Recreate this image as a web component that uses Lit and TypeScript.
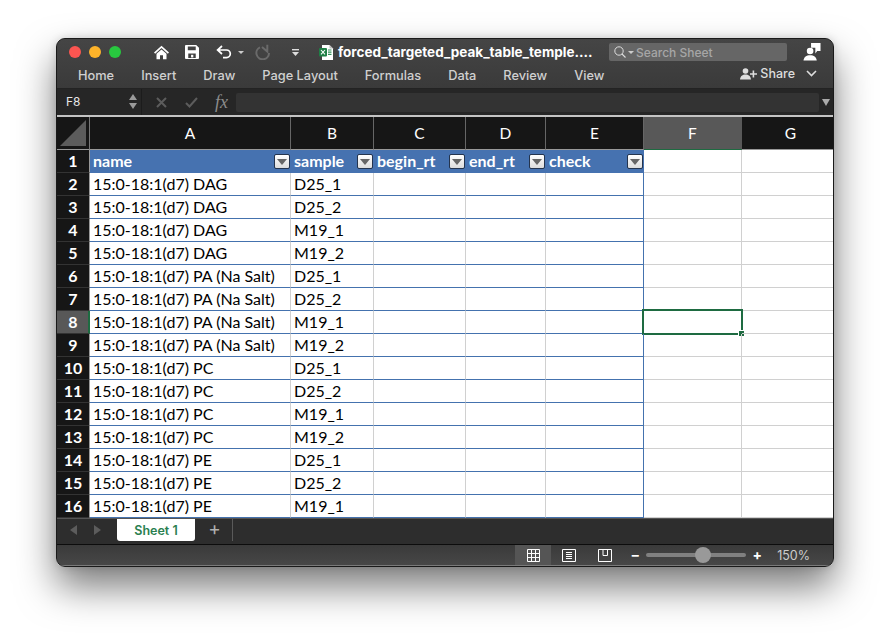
import { LitElement, html, css, svg } from 'lit';
import { customElement } from 'lit/decorators.js';

const NAMES = [
  'name',
  '15:0-18:1(d7) DAG', '15:0-18:1(d7) DAG', '15:0-18:1(d7) DAG', '15:0-18:1(d7) DAG',
  '15:0-18:1(d7) PA (Na Salt)', '15:0-18:1(d7) PA (Na Salt)', '15:0-18:1(d7) PA (Na Salt)', '15:0-18:1(d7) PA (Na Salt)',
  '15:0-18:1(d7) PC', '15:0-18:1(d7) PC', '15:0-18:1(d7) PC', '15:0-18:1(d7) PC',
  '15:0-18:1(d7) PE', '15:0-18:1(d7) PE', '15:0-18:1(d7) PE',
];
const SAMPLES = ['D25_1', 'D25_2', 'M19_1', 'M19_2'];
const TABS = ['Home', 'Insert', 'Draw', 'Page Layout', 'Formulas', 'Data', 'Review', 'View'];
const COLS = ['A', 'B', 'C', 'D', 'E', 'F', 'G'];
const HEADS = ['name', 'sample', 'begin_rt', 'end_rt', 'check'];

const icons = {
  home: svg`<svg width="17" height="15" viewBox="0 0 20 18"><path d="M10 1 L19 9 L17.6 10.4 L10 3.7 L2.4 10.4 L1 9Z" fill="#fff"/><path d="M4 10.6 L10 5.4 L16 10.6 V17 H11.8 V12.4 H8.2 V17 H4Z" fill="#fff"/></svg>`,
  save: svg`<svg width="14" height="14" viewBox="0 0 15 15"><path fill-rule="evenodd" d="M1 0 H12 L15 3 V14 a1 1 0 0 1-1 1 H1 a1 1 0 0 1-1-1 V1 a1 1 0 0 1 1-1Z M3 1.5 V5.5 H11.5 V1.5Z M3.5 9 V14 H11.5 V9Z" fill="#fff"/><rect x="6.5" y="10.5" width="2.4" height="2.8" fill="#fff"/></svg>`,
  undo: svg`<svg width="16" height="14" viewBox="0 0 16 14"><path d="M6 1 L1.6 5 L6 9 M2 5 H10.5 a3.8 3.8 0 0 1 0 7.6 H7" fill="none" stroke="#fff" stroke-width="1.7"/></svg>`,
  redo: svg`<svg width="17" height="16" viewBox="0 0 17 16"><path d="M12.3 .7 V7.5 L7 3" fill="none" stroke="#6a6a6a" stroke-width="2"/><path d="M5 3.3 A6.3 6.3 0 1 0 14 9" fill="none" stroke="#6a6a6a" stroke-width="2"/></svg>`,
  customize: svg`<svg width="9" height="9" viewBox="0 0 9 9"><rect x="1" y="1" width="7" height="1.4" fill="#ddd"/><path d="M1 4 H8 L4.5 8Z" fill="#ddd"/></svg>`,
  xlsx: svg`<svg width="15" height="15" viewBox="0 0 15 15"><path d="M3 0 H10.5 L14 3.5 V15 H3Z" fill="#fff"/><path d="M10.5 0 V3.5 H14Z" fill="#bbb"/><rect x="0" y="3" width="8" height="8.4" rx="1" fill="#1f7f46"/><path d="M2 5 L6 9.4 M6 5 L2 9.4" stroke="#fff" stroke-width="1.1"/><path d="M9 5 H12.5 M9 7.2 H12.5 M9 9.4 H12.5" stroke="#2f8f56" stroke-width="1.2"/></svg>`,
  search: svg`<svg width="12" height="12" viewBox="0 0 12 12"><circle cx="5" cy="5" r="4.2" fill="none" stroke="#ddd" stroke-width="1"/><path d="M8 8 L11.5 11.5" stroke="#ddd" stroke-width="1.1"/></svg>`,
  person: svg`<svg width="18" height="18" viewBox="0 0 19 19"><path d="M8.5 0 H18.5 V8.5 H15 L13 11 V5 H8.5Z" fill="#fff"/><circle cx="7.5" cy="8.5" r="3.5" fill="#fff"/><path d="M0.5 18.5 C1 14.5 3.5 12.8 7.5 12.8 S14 14.5 14.5 18.5Z" fill="#fff"/></svg>`,
  share: svg`<svg width="17" height="12" viewBox="0 0 17 12"><circle cx="5.5" cy="3" r="2.8" fill="#ddd"/><path d="M0 11.5 C.4 8 2.5 6.6 5.5 6.6 S10.6 8 11 11.5Z" fill="#ddd"/><path d="M13.4 2.5 V9.5 M10 6 H17" stroke="#ddd" stroke-width="1.6"/></svg>`,
  chevron: svg`<svg width="11" height="7" viewBox="0 0 11 7"><path d="M1 1 L5.5 5.5 L10 1" fill="none" stroke="#ddd" stroke-width="1.6"/></svg>`,
  gridView: svg`<svg width="13" height="13" viewBox="0 0 13 13"><path d="M.5 .5 H12.5 V12.5 H.5Z M4.5 .5 V12.5 M8.5 .5 V12.5 M.5 4.5 H12.5 M.5 8.5 H12.5" fill="none" stroke="#fff"/></svg>`,
  pageView: svg`<svg width="14" height="13" viewBox="0 0 14 13"><path d="M.5 .5 H13.5 V12.5 H.5Z" fill="none" stroke="#fff"/><path d="M4 3.5 H10 M4 5.5 H10 M4 7.5 H10 M4 9.5 H10" stroke="#fff"/></svg>`,
  breakView: svg`<svg width="14" height="13" viewBox="0 0 14 13"><path d="M.5 .5 H13.5 V12.5 H.5Z M5 .5 V6.5 H9.5 V.5" fill="none" stroke="#fff"/></svg>`,
};

@customElement('app-root')
export class AppRoot extends LitElement {
  static styles = css`
    :host {
      display: block;
      height: 641px;
      box-sizing: border-box;
      padding: 38px 56px 74px;
      background: #fff;
      font-family: Inter, Roboto, sans-serif;
      overflow: hidden;
    }
    .window {
      height: 529px;
      display: flex;
      flex-direction: column;
      background: #333;
      border: 1px solid #1a1a1a;
      border-radius: 9px;
      overflow: hidden;
      box-sizing: border-box;
    }
    .shadow {
      border-radius: 9px;
      box-shadow: 0 20px 38px rgba(0, 0, 0, 0.52), 0 0 8px rgba(0, 0, 0, 0.14);
    }
    .titlebar {
      height: 49px;
      flex: none;
      background: linear-gradient(#454545, #3a3a3a);
      border-bottom: 1px solid #232323;
      display: flex;
      flex-direction: column;
    }
    .toolbar {
      height: 26px;
      flex: none;
      display: flex;
      align-items: center;
      box-sizing: border-box;
    }
    .lights {
      display: flex;
      gap: 8px;
      padding-left: 12px;
      width: 96px;
      box-sizing: border-box;
      flex: none;
    }
    .light {
      width: 12px;
      height: 12px;
      border-radius: 50%;
    }
    .tool {
      display: flex;
      align-items: center;
      flex: none;
    }
    .doc {
      display: flex;
      align-items: center;
      gap: 4px;
      color: #fff;
      font-size: 13.5px;
      font-weight: 700;
      margin-left: 19px;
      width: 290px;
      flex: none;
      white-space: nowrap;
    }
    .search {
      width: 178px;
      height: 18px;
      background: #666;
      border-radius: 2px;
      display: flex;
      align-items: center;
      gap: 2px;
      padding-left: 5px;
      box-sizing: border-box;
      color: #a6a6a6;
      font-size: 12px;
      font-weight: 500;
      flex: none;
    }
    .caret {
      width: 0;
      height: 0;
      border: 3px solid transparent;
      border-top: 3px solid #ccc;
      border-bottom: 0;
    }
    .tabs {
      display: flex;
      align-items: center;
      height: 20px;
      padding-left: 21px;
      gap: 27px;
      color: #d0d0d0;
      font-size: 12.8px;
      font-weight: 500;
      position: relative;
    }
    .share {
      margin-left: auto;
      display: flex;
      align-items: center;
      padding-right: 16px;
      gap: 3px;
      color: #ddd;
      margin-top: -3px;
      font-size: 12.5px;
    }
    .formula {
      height: 26px;
      flex: none;
      background: #262626;
      display: flex;
      align-items: center;
      box-sizing: border-box;
      color: #e6e6e6;
      font-size: 12px;
    }
    .namebox {
      width: 85px;
      flex: none;
      height: 100%;
      display: flex;
      align-items: center;
      justify-content: space-between;
      padding: 0 4px 1px 9px;
      box-sizing: border-box;
      border-right: 1px solid #1c1c1c;
    }
    .updown {
      display: flex;
      flex-direction: column;
      gap: 3px;
    }
    .up, .down {
      width: 0;
      height: 0;
      border-left: 4px solid transparent;
      border-right: 4px solid transparent;
    }
    .up { border-bottom: 6px solid #9a9a9a; }
    .down { border-top: 6px solid #9a9a9a; }
    .fx-icons {
      width: 94px;
      flex: none;
      display: flex;
      align-items: center;
      gap: 17.5px;
      padding-left: 14px;
      box-sizing: border-box;
    }
    .fx {
      font-family: 'Liberation Serif', serif;
      font-style: italic;
      font-size: 18px;
      color: #8c8c8c;
    }
    .field {
      width: 583px;
      flex: none;
      height: 19px;
      background: #333;
      border-radius: 2px;
    }
    .drop {
      margin-left: 3px;
      width: 0;
      height: 0;
      border-left: 4px solid transparent;
      border-right: 4px solid transparent;
      border-top: 7px solid #aaa;
    }
    .sheet {
      flex: none;
      display: grid;
      grid-template-columns: 33px 201px 83px 92px 80px 98px 98px 98px;
      grid-template-rows: 33px repeat(16, 23px);
      border-top: 2px solid #c4c4c4;
      background: #fff;
      font-family: Lato, 'Open Sans', sans-serif;
      font-size: 16px;
      color: #000;
      line-height: 22px;
    }
    .corner {
      background: #161616;
      border-right: 1px solid #777;
      border-bottom: 1px solid #999;
      display: flex;
      align-items: flex-end;
      justify-content: flex-end;
      padding: 0 3px 3px 0;
    }
    .colhead {
      background: #161616;
      color: #fff;
      border-right: 1px solid #666;
      border-bottom: 1px solid #999;
      display: flex;
      align-items: center;
      justify-content: center;
      font-size: 15.5px;
    }
    .colhead.active {
      background: #585858;
      border-right-color: #585858;
      border-bottom: 1px solid #1e6b41;
    }
    .rowhead {
      background: #161616;
      color: #fff;
      border-right: 1px solid #999;
      border-bottom: 1px solid #333;
      display: flex;
      align-items: center;
      justify-content: center;
      font-weight: 700;
      font-size: 16px;
    }
    .rowhead.active {
      background: #585858;
      border-right: 2px solid #1e6b41;
      padding-left: 1px;
    }
    .cell {
      border-right: 1px solid #d0d0d0;
      border-bottom: 1px solid #d0d0d0;
      padding-left: 3px;
      white-space: nowrap;
      position: relative;
      min-width: 0;
    }
    .cell.body {
      border-bottom-color: #4472ae;
    }
    .cell.edge {
      border-right-color: #4472ae;
    }
    .head {
      background: #4672b0;
      color: #fff;
      font-weight: 700;
      border-right: 0;
      border-bottom: 0;
      display: flex;
      align-items: center;
      justify-content: space-between;
      padding-right: 1px;
    }
    .head span {
      margin-bottom: 2px;
    }
    .filter {
      width: 14px;
      height: 13px;
      border: 1px solid #24344e;
      border-radius: 2px;
      background: linear-gradient(#fff, #dcdcdc);
      display: flex;
      align-items: center;
      justify-content: center;
      flex: none;
    }
    .filter i {
      width: 0;
      height: 0;
      border-left: 5px solid transparent;
      border-right: 5px solid transparent;
      border-top: 6px solid #666;
    }
    .selected {
      position: absolute;
      left: -2px;
      top: -2px;
      border: 2px solid #1e6b41;
      box-sizing: content-box;
      width: 97px;
      height: 22px;
    }
    .handle {
      position: absolute;
      right: -4px;
      bottom: -4px;
      width: 5px;
      height: 5px;
      background: #1e6b41;
      border: 1px solid #fff;
    }
    .tabbar {
      height: 27px;
      flex: none;
      background: #2d2d2d;
      border-top: 1px solid #555;
      border-bottom: 1px solid #0c0c0c;
      box-sizing: border-box;
      display: flex;
      align-items: flex-start;
    }
    .nav {
      width: 60px;
      flex: none;
      display: flex;
      align-items: center;
      gap: 17px;
      padding: 6px 0 0 13px;
      box-sizing: border-box;
    }
    .left, .right {
      width: 0;
      height: 0;
      border-top: 5px solid transparent;
      border-bottom: 5px solid transparent;
    }
    .left { border-right: 7px solid #5c5c5c; }
    .right { border-left: 7px solid #5c5c5c; }
    .sheet-tab {
      width: 78px;
      height: 22px;
      background: #fff;
      border-radius: 0 0 3px 3px;
      color: #2a8050;
      font-size: 12.5px;
      font-weight: 600;
      display: flex;
      align-items: center;
      justify-content: center;
      flex: none;
    }
    .add {
      width: 38px;
      height: 22px;
      box-sizing: border-box;
      border-right: 1px solid #5a5a5a;
      padding-left: 2px;
      color: #b0b0b0;
      font-size: 19px;
      line-height: 20px;
      text-align: center;
      flex: none;
    }
    .status {
      flex: 1;
      background: linear-gradient(#3a3a3a, #474747);
      border-bottom: 1px solid #7a7a7a;
      display: flex;
      align-items: center;
      justify-content: flex-end;
      color: #ddd;
      font-size: 12.5px;
    }
    .view {
      width: 36px;
      height: 100%;
      display: flex;
      align-items: center;
      justify-content: center;
      flex: none;
    }
    .view.on {
      background: #555;
    }
    .zoom {
      display: flex;
      align-items: center;
      padding: 0 23px 0 7px;
      gap: 6px;
    }
    .pm {
      color: #fff;
      font-weight: 700;
      font-size: 14px;
      width: 10px;
      text-align: center;
      line-height: 14px;
    }
    .track {
      width: 100px;
      height: 4px;
      border-radius: 2px;
      background: #808080;
      position: relative;
    }
    .knob {
      position: absolute;
      left: 49px;
      top: -6px;
      width: 16px;
      height: 16px;
      border-radius: 50%;
      background: #999;
    }
    .pct {
      margin-left: 9px;
      font-weight: 400;
      color: #ccc;
    }
  `;

  private renderCells(row: number) {
    const cells = [];
    for (let c = 0; c < 7; c++) {
      const inTable = c < 5;
      let text = '';
      if (c === 0) text = NAMES[row - 1];
      if (c === 1) text = SAMPLES[(row - 2) % 4];
      const cls = `cell ${inTable ? 'body' : ''} ${c === 4 ? 'edge' : ''}`;
      cells.push(html`<div class=${cls}>
        ${text}
        ${row === 8 && c === 5 ? html`<div class="selected"><div class="handle"></div></div>` : ''}
      </div>`);
    }
    return cells;
  }

  render() {
    return html`
      <div class="shadow">
        <div class="window">
          <div class="titlebar">
            <div class="toolbar">
              <div class="lights">
                <div class="light" style="background:#fb5551"></div>
                <div class="light" style="background:#fdb32a"></div>
                <div class="light" style="background:#28c73f"></div>
              </div>
              <div class="tool">${icons.home}</div>
              <div class="tool" style="margin-left:15px">${icons.save}</div>
              <div class="tool" style="margin-left:17px">${icons.undo}</div>
              <div class="caret" style="margin-left:6px"></div>
              <div class="tool" style="margin-left:11px">${icons.redo}</div>
              <div class="tool" style="margin-left:19px">${icons.customize}</div>
              <div class="doc">${icons.xlsx}<span>forced_targeted_peak_table_temple....</span></div>
              <div class="search">
                ${icons.search}<div class="caret"></div><span>Search Sheet</span>
              </div>
              <div class="tool" style="margin-left:16px">${icons.person}</div>
            </div>
            <div class="tabs">
              ${TABS.map((t) => html`<span>${t}</span>`)}
              <div class="share">${icons.share}<span style="margin-right:8px">Share</span>${icons.chevron}</div>
            </div>
          </div>
          <div class="formula">
            <div class="namebox">
              <span>F8</span>
              <div class="updown"><div class="up"></div><div class="down"></div></div>
            </div>
            <div class="fx-icons">
              <svg width="11" height="11" viewBox="0 0 11 11"><path d="M1 1 L10 10 M10 1 L1 10" stroke="#5c5c5c" stroke-width="2"/></svg>
              <svg width="13" height="11" viewBox="0 0 13 11"><path d="M1 6 L4.5 9.5 L12 1" fill="none" stroke="#5c5c5c" stroke-width="2"/></svg>
              <span class="fx">fx</span>
            </div>
            <div class="field"></div>
            <div class="drop"></div>
          </div>
          <div class="sheet">
            <div class="corner">
              <svg width="26" height="26" viewBox="0 0 26 26"><path d="M26 0 V26 H0Z" fill="#5c5c5c"/></svg>
            </div>
            ${COLS.map((c) => html`<div class="colhead ${c === 'F' ? 'active' : ''}">${c}</div>`)}
            ${[...Array(16).keys()].map((i) => {
              const row = i + 1;
              if (row === 1) {
                return html`
                  <div class="rowhead">1</div>
                  ${HEADS.map((h) => html`<div class="cell head"><span>${h}</span><div class="filter"><i></i></div></div>`)}
                  <div class="cell"></div>
                  <div class="cell"></div>
                `;
              }
              return html`
                <div class="rowhead ${row === 8 ? 'active' : ''}">${row}</div>
                ${this.renderCells(row)}
              `;
            })}
          </div>
          <div class="tabbar">
            <div class="nav"><div class="left"></div><div class="right"></div></div>
            <div class="sheet-tab">Sheet 1</div>
            <div class="add">+</div>
          </div>
          <div class="status">
            <div class="view on">${icons.gridView}</div>
            <div class="view">${icons.pageView}</div>
            <div class="view">${icons.breakView}</div>
            <div class="zoom">
              <span class="pm">–</span>
              <div class="track"><div class="knob"></div></div>
              <span class="pm">+</span>
              <span class="pct">150%</span>
            </div>
          </div>
        </div>
      </div>
    `;
  }
}
